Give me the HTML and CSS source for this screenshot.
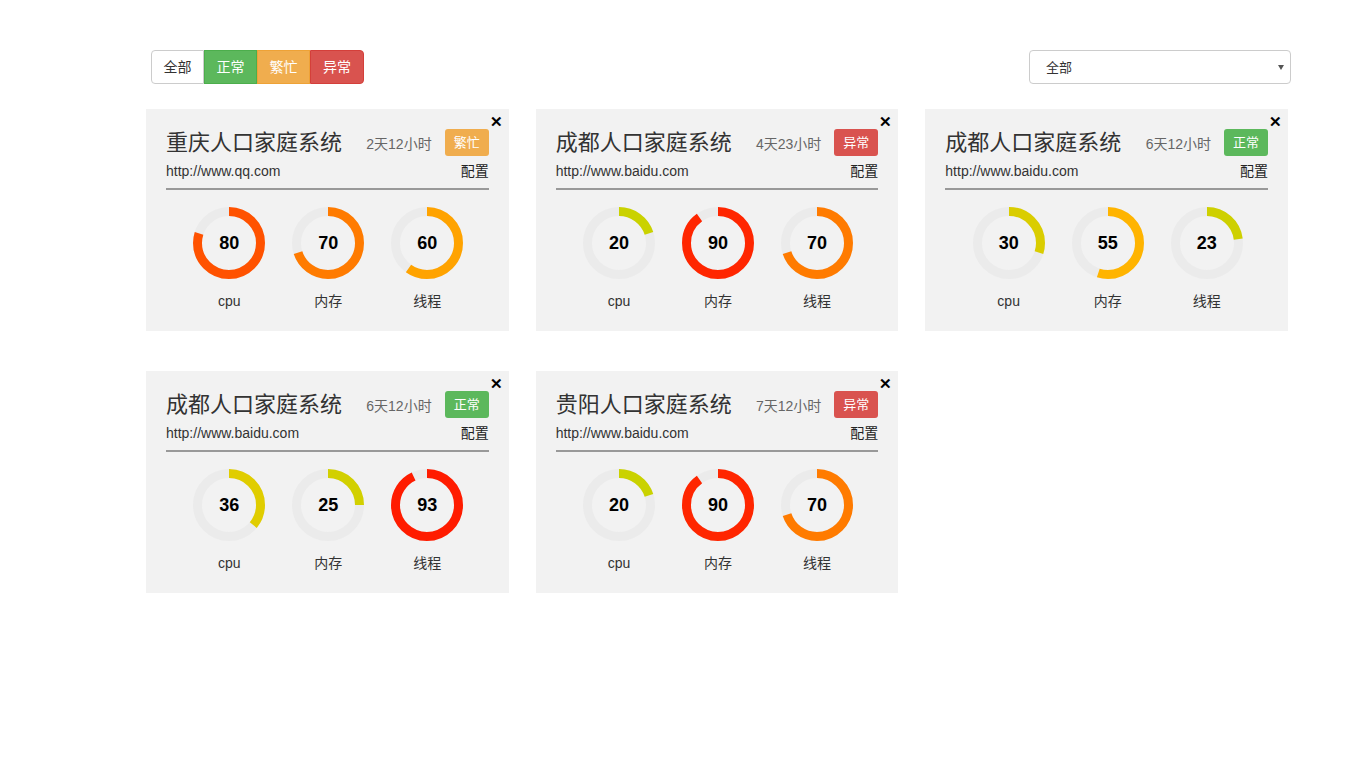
FILE: index.html
```html
<!DOCTYPE html>
<html lang="zh-CN">
<head>
<meta charset="utf-8">
<title>系统监控</title>
<link rel="stylesheet" href="styles.css">
</head>
<body>
<div class="page">
  <div class="toolbar">
    <div class="btn-group">
      <button class="btn btn-default">全部</button>
      <button class="btn btn-success">正常</button>
      <button class="btn btn-warning">繁忙</button>
      <button class="btn btn-danger">异常</button>
    </div>
    <div class="select-wrap">
      <select class="select"><option>全部</option></select>
    </div>
  </div>

  <div class="grid">
    <div class="card">
      <span class="close">✕</span>
      <div class="head"><h2 class="title">重庆人口家庭系统</h2><span class="time">2天12小时</span><span class="badge b-warning">繁忙</span></div>
      <div class="url-row"><span class="url">http://www.qq.com</span><a class="cfg">配置</a></div>
      <div class="gauges">
        <div class="gauge"><div class="ring"><svg viewBox="0 0 72 72"><circle class="track" cx="36" cy="36" r="31.5"/><circle class="bar" cx="36" cy="36" r="31.5" pathLength="100" stroke="#ff5200" stroke-dasharray="80 100"/></svg><span class="num">80</span></div><div class="label">cpu</div></div>
        <div class="gauge"><div class="ring"><svg viewBox="0 0 72 72"><circle class="track" cx="36" cy="36" r="31.5"/><circle class="bar" cx="36" cy="36" r="31.5" pathLength="100" stroke="#ff7b00" stroke-dasharray="70 100"/></svg><span class="num">70</span></div><div class="label">内存</div></div>
        <div class="gauge"><div class="ring"><svg viewBox="0 0 72 72"><circle class="track" cx="36" cy="36" r="31.5"/><circle class="bar" cx="36" cy="36" r="31.5" pathLength="100" stroke="#ffa300" stroke-dasharray="60 100"/></svg><span class="num">60</span></div><div class="label">线程</div></div>
      </div>
    </div>

    <div class="card">
      <span class="close">✕</span>
      <div class="head"><h2 class="title">成都人口家庭系统</h2><span class="time">4天23小时</span><span class="badge b-danger">异常</span></div>
      <div class="url-row"><span class="url">http://www.baidu.com</span><a class="cfg">配置</a></div>
      <div class="gauges">
        <div class="gauge"><div class="ring"><svg viewBox="0 0 72 72"><circle class="track" cx="36" cy="36" r="31.5"/><circle class="bar" cx="36" cy="36" r="31.5" pathLength="100" stroke="#cad200" stroke-dasharray="20 100"/></svg><span class="num">20</span></div><div class="label">cpu</div></div>
        <div class="gauge"><div class="ring"><svg viewBox="0 0 72 72"><circle class="track" cx="36" cy="36" r="31.5"/><circle class="bar" cx="36" cy="36" r="31.5" pathLength="100" stroke="#ff2600" stroke-dasharray="90 100"/></svg><span class="num">90</span></div><div class="label">内存</div></div>
        <div class="gauge"><div class="ring"><svg viewBox="0 0 72 72"><circle class="track" cx="36" cy="36" r="31.5"/><circle class="bar" cx="36" cy="36" r="31.5" pathLength="100" stroke="#ff7b00" stroke-dasharray="70 100"/></svg><span class="num">70</span></div><div class="label">线程</div></div>
      </div>
    </div>

    <div class="card">
      <span class="close">✕</span>
      <div class="head"><h2 class="title">成都人口家庭系统</h2><span class="time">6天12小时</span><span class="badge b-success">正常</span></div>
      <div class="url-row"><span class="url">http://www.baidu.com</span><a class="cfg">配置</a></div>
      <div class="gauges">
        <div class="gauge"><div class="ring"><svg viewBox="0 0 72 72"><circle class="track" cx="36" cy="36" r="31.5"/><circle class="bar" cx="36" cy="36" r="31.5" pathLength="100" stroke="#dacd00" stroke-dasharray="30 100"/></svg><span class="num">30</span></div><div class="label">cpu</div></div>
        <div class="gauge"><div class="ring"><svg viewBox="0 0 72 72"><circle class="track" cx="36" cy="36" r="31.5"/><circle class="bar" cx="36" cy="36" r="31.5" pathLength="100" stroke="#ffb400" stroke-dasharray="55 100"/></svg><span class="num">55</span></div><div class="label">内存</div></div>
        <div class="gauge"><div class="ring"><svg viewBox="0 0 72 72"><circle class="track" cx="36" cy="36" r="31.5"/><circle class="bar" cx="36" cy="36" r="31.5" pathLength="100" stroke="#ced000" stroke-dasharray="23 100"/></svg><span class="num">23</span></div><div class="label">线程</div></div>
      </div>
    </div>

    <div class="card">
      <span class="close">✕</span>
      <div class="head"><h2 class="title">成都人口家庭系统</h2><span class="time">6天12小时</span><span class="badge b-success">正常</span></div>
      <div class="url-row"><span class="url">http://www.baidu.com</span><a class="cfg">配置</a></div>
      <div class="gauges">
        <div class="gauge"><div class="ring"><svg viewBox="0 0 72 72"><circle class="track" cx="36" cy="36" r="31.5"/><circle class="bar" cx="36" cy="36" r="31.5" pathLength="100" stroke="#e0cd00" stroke-dasharray="36 100"/></svg><span class="num">36</span></div><div class="label">cpu</div></div>
        <div class="gauge"><div class="ring"><svg viewBox="0 0 72 72"><circle class="track" cx="36" cy="36" r="31.5"/><circle class="bar" cx="36" cy="36" r="31.5" pathLength="100" stroke="#d2d000" stroke-dasharray="25 100"/></svg><span class="num">25</span></div><div class="label">内存</div></div>
        <div class="gauge"><div class="ring"><svg viewBox="0 0 72 72"><circle class="track" cx="36" cy="36" r="31.5"/><circle class="bar" cx="36" cy="36" r="31.5" pathLength="100" stroke="#ff1c00" stroke-dasharray="93 100"/></svg><span class="num">93</span></div><div class="label">线程</div></div>
      </div>
    </div>

    <div class="card">
      <span class="close">✕</span>
      <div class="head"><h2 class="title">贵阳人口家庭系统</h2><span class="time">7天12小时</span><span class="badge b-danger">异常</span></div>
      <div class="url-row"><span class="url">http://www.baidu.com</span><a class="cfg">配置</a></div>
      <div class="gauges">
        <div class="gauge"><div class="ring"><svg viewBox="0 0 72 72"><circle class="track" cx="36" cy="36" r="31.5"/><circle class="bar" cx="36" cy="36" r="31.5" pathLength="100" stroke="#cad200" stroke-dasharray="20 100"/></svg><span class="num">20</span></div><div class="label">cpu</div></div>
        <div class="gauge"><div class="ring"><svg viewBox="0 0 72 72"><circle class="track" cx="36" cy="36" r="31.5"/><circle class="bar" cx="36" cy="36" r="31.5" pathLength="100" stroke="#ff2600" stroke-dasharray="90 100"/></svg><span class="num">90</span></div><div class="label">内存</div></div>
        <div class="gauge"><div class="ring"><svg viewBox="0 0 72 72"><circle class="track" cx="36" cy="36" r="31.5"/><circle class="bar" cx="36" cy="36" r="31.5" pathLength="100" stroke="#ff7b00" stroke-dasharray="70 100"/></svg><span class="num">70</span></div><div class="label">线程</div></div>
      </div>
    </div>
  </div>
</div>
</body>
</html>
```

FILE: styles.css
```css
* { box-sizing: border-box; }
html, body { margin: 0; padding: 0; background: #fff; }
body {
  font-family: "Liberation Sans", "Noto Sans CJK SC", sans-serif;
  font-size: 14px;
  color: #333;
}
.page { padding-top: 50px; }

.toolbar {
  display: flex;
  justify-content: space-between;
  align-items: center;
  margin-left: 151px;
  width: 1140px;
  height: 34px;
}
.btn-group { display: flex; }
.btn {
  width: 53px;
  height: 34px;
  padding: 0;
  font-family: "Liberation Sans", "Noto Sans CJK SC", sans-serif;
  font-size: 14px;
  border: 1px solid;
  margin: 0;
  border-radius: 0;
  line-height: 32px;
}
.btn-default { background: #fff; color: #333; border-color: #ccc; border-radius: 4px 0 0 4px; }
.btn-success { background: #5cb85c; color: #fff; border-color: #4cae4c; }
.btn-warning { background: #f0ad4e; color: #fff; border-color: #eea236; }
.btn-danger { background: #d9534f; color: #fff; border-color: #d43f3a; border-radius: 0 4px 4px 0; width: 54px; }

.select-wrap { position: relative; width: 262px; height: 34px; }
.select-wrap::after {
  content: "";
  position: absolute;
  right: 7px;
  top: 15px;
  border-left: 3px solid transparent;
  border-right: 3px solid transparent;
  border-top: 5px solid #555;
}
.select {
  appearance: none;
  -webkit-appearance: none;
  width: 100%;
  height: 34px;
  border: 1px solid #ccc;
  border-radius: 4px;
  background: #fff;
  padding: 0 16px;
  font-family: "Liberation Sans", "Noto Sans CJK SC", sans-serif;
  font-size: 13px;
  color: #333;
  outline: none;
}

.grid {
  margin-left: 146px;
  margin-top: 25px;
  width: 1142px;
  display: grid;
  grid-template-columns: repeat(3, 1fr);
  column-gap: 27px;
  row-gap: 40px;
}
.card {
  position: relative;
  background: #f2f2f2;
  height: 222px;
  padding: 20px 20px 20px;
}
.close {
  position: absolute;
  top: 4px;
  right: 6px;
  font-size: 15px;
  font-weight: bold;
  color: #000;
  line-height: 18px;
}
.head {
  display: flex;
  align-items: center;
  height: 27px;
}
.title {
  margin: 0;
  font-weight: normal;
  font-size: 22px;
  line-height: 25px;
  color: #333;
  flex: 1;
  white-space: nowrap;
}
.time { font-size: 14px; color: #666; margin-right: 13px; }
.badge {
  display: inline-block;
  width: 44px;
  height: 27px;
  line-height: 27px;
  text-align: center;
  font-size: 13px;
  color: #fff;
  border-radius: 3px;
}
.b-warning { background: #f0ad4e; }
.b-danger { background: #d9534f; }
.b-success { background: #5cb85c; }

.url-row {
  display: flex;
  justify-content: space-between;
  margin-top: 6px;
  line-height: 18px;
  padding-bottom: 8px;
  border-bottom: 2px solid #999;
}
.url { font-size: 14px; color: #333; }
.cfg { font-size: 14px; color: #222; }

.gauges {
  display: flex;
  justify-content: center;
  margin-top: 17px;
  padding-left: 2px;
}
.gauge { width: 99px; display: flex; flex-direction: column; align-items: center; }
.ring { position: relative; width: 72px; height: 72px; }
.ring svg { width: 72px; height: 72px; display: block; transform: rotate(-90deg); }
.track { fill: none; stroke: #ebebeb; stroke-width: 9; }
.bar { fill: none; stroke-width: 9; }
.num {
  position: absolute;
  inset: 0;
  display: flex;
  align-items: center;
  justify-content: center;
  padding-top: 1px;
  font-size: 18px;
  font-weight: bold;
  color: #000;
}
.label { margin-top: 12px; line-height: 20px; font-size: 14px; color: #333; }
```
